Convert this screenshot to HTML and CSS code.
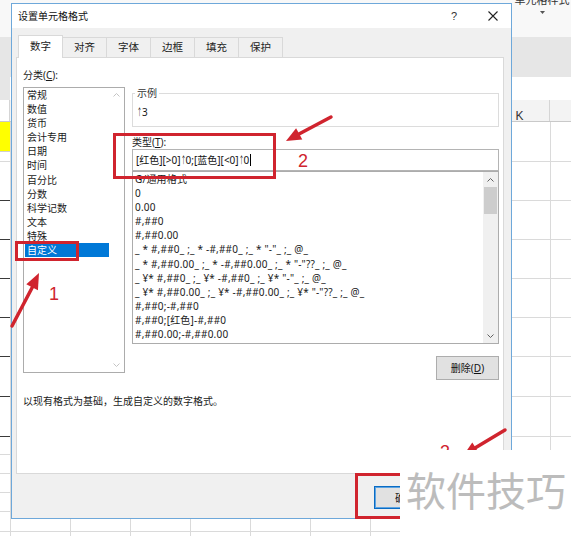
FILE: index.html
```html
<!DOCTYPE html>
<html lang="zh-CN">
<head>
<meta charset="utf-8">
<title>设置单元格格式</title>
<link rel="stylesheet" href="styles.css">
</head>
<body>
<div class="sheet">
  <div class="ribbon">
    <div class="ribbon-group">
      <span class="ribbon-label">单元格样式</span>
      <svg class="ribbon-caret" width="5" height="3" viewBox="0 0 5 3"><path d="M0 0H5L2.5 3Z" fill="#555"/></svg>
    </div>
  </div>
  <div class="fbar"></div>
  <div class="gap"></div>
  <div class="colhead">
    <span class="rh"></span>
    <span class="ch"></span><span class="ch"></span><span class="ch"></span><span class="ch"></span><span class="ch"></span><span class="ch"></span><span class="ch"></span><span class="ch"></span><span class="ch">K</span><span class="ch"></span>
  </div>
  <div class="rows">
    <div class="row h40"><span class="c0"><span class="yellow"></span></span><span class="cells"></span></div>
    <div class="row h39"><span class="c0 dark"></span><span class="cells"></span></div>
    <div class="row h39"><span class="c0 dark"></span><span class="cells"></span></div>
    <div class="row h39"><span class="c0 dark"></span><span class="cells"></span></div>
    <div class="row h39"><span class="c0 dark"></span><span class="cells"></span></div>
    <div class="row h39"><span class="c0 dark"></span><span class="cells"></span></div>
    <div class="row h40"><span class="c0 dark"></span><span class="cells"></span></div>
    <div class="row h40"><span class="c0 dark"></span><span class="cells"></span></div>
    <div class="row h18"><span class="c0"></span><span class="cells"></span></div>
    <div class="row h19"><span class="c0"></span><span class="cells"></span></div>
    <div class="row h19"><span class="c0"></span><span class="cells"></span></div>
    <div class="row h19"><span class="c0"></span><span class="cells"></span></div>
    <div class="row h20"><span class="c0"></span><span class="cells"></span></div>
    <div class="row h20"><span class="c0"></span><span class="cells"></span></div>
  </div>
</div>

<div class="dialog">
  <div class="titlebar">
    <span class="title">设置单元格格式</span>
    <span class="help">?</span>
    <svg class="close" width="10" height="10" viewBox="0 0 10 10"><path d="M0.5 0.5L9.5 9.5M9.5 0.5L0.5 9.5" stroke="#222" stroke-width="1.1" fill="none"/></svg>
  </div>
  <div class="tabs">
    <span class="tab active">数字</span>
    <span class="tab">对齐</span>
    <span class="tab">字体</span>
    <span class="tab">边框</span>
    <span class="tab">填充</span>
    <span class="tab">保护</span>
  </div>
  <div class="panel">
    <div class="cols">
      <div class="cat">
        <div class="lbl cat-lbl">分类(<u>C</u>):</div>
        <div class="listbox cat-list">
          <ul class="items">
            <li>常规</li>
            <li>数值</li>
            <li>货币</li>
            <li>会计专用</li>
            <li>日期</li>
            <li>时间</li>
            <li>百分比</li>
            <li>分数</li>
            <li>科学记数</li>
            <li>文本</li>
            <li>特殊</li>
            <li class="sel">自定义</li>
          </ul>
          <div class="vscroll off">
            <span class="arr"><svg width="7" height="4" viewBox="0 0 7 4"><path d="M0.5 3.5L3.5 0.5L6.5 3.5" stroke="currentColor" fill="none"/></svg></span>
            <span class="arr"><svg width="7" height="4" viewBox="0 0 7 4"><path d="M0.5 0.5L3.5 3.5L6.5 0.5" stroke="currentColor" fill="none"/></svg></span>
          </div>
        </div>
      </div>
      <div class="main">
        <fieldset class="sample">
          <legend>示例</legend>
          <div class="sample-val"><span class="up">↑</span>3</div>
        </fieldset>
        <div class="lbl type-lbl">类型(<u>T</u>):</div>
        <div class="type-input">[红色][&gt;0]<span class="up">↑</span>0;[蓝色][&lt;0]<span class="up">↑</span>0<span class="caret"></span></div>
        <div class="listbox fmt-list">
          <ul class="items">
            <li>G/通用格式</li>
            <li>0</li>
            <li>0.00</li>
            <li>#,##0</li>
            <li>#,##0.00</li>
            <li>_ * #,##0_ ;_ * -#,##0_ ;_ * "-"_ ;_ @_ </li>
            <li>_ * #,##0.00_ ;_ * -#,##0.00_ ;_ * "-"??_ ;_ @_ </li>
            <li>_ ¥* #,##0_ ;_ ¥* -#,##0_ ;_ ¥* "-"_ ;_ @_ </li>
            <li>_ ¥* #,##0.00_ ;_ ¥* -#,##0.00_ ;_ ¥* "-"??_ ;_ @_ </li>
            <li>#,##0;-#,##0</li>
            <li>#,##0;[红色]-#,##0</li>
            <li>#,##0.00;-#,##0.00</li>
          </ul>
          <div class="vscroll">
            <span class="arr"><svg width="7" height="4" viewBox="0 0 7 4"><path d="M0.5 3.5L3.5 0.5L6.5 3.5" stroke="currentColor" fill="none"/></svg></span>
            <span class="thumb"></span>
            <span class="track"></span>
            <span class="arr"><svg width="7" height="4" viewBox="0 0 7 4"><path d="M0.5 0.5L3.5 3.5L6.5 0.5" stroke="currentColor" fill="none"/></svg></span>
          </div>
        </div>
        <div class="btn-row"><button class="btn del">删除(<u>D</u>)</button></div>
      </div>
    </div>
    <p class="desc">以现有格式为基础，生成自定义的数字格式。</p>
  </div>
  <div class="footer">
    <button class="btn default">确定</button>
    <button class="btn">取消</button>
  </div>
</div>

<div class="mark box1"></div>
<div class="mark box2"></div>
<div class="mark box3"></div>
<svg class="arrows" width="571" height="536" viewBox="0 0 571 536">
  <g stroke="#d0242e" stroke-width="3.5" stroke-linecap="round">
    <line x1="12" y1="326" x2="33" y2="286"/>
    <line x1="331" y1="117" x2="299" y2="134"/>
    <line x1="505" y1="430" x2="475" y2="448"/>
  </g>
  <g fill="#d0242e">
    <polygon points="39,273 37.9,290.3 26.3,284.3"/>
    <polygon points="286,141 302.3,139.6 296.1,128.2"/>
    <polygon points="463,456 479.2,453.6 472.3,442.6"/>
  </g>
</svg>
<div class="num n1">1</div>
<div class="num n2">2</div>
<div class="num n3">3</div>

<div class="watermark">软件技巧</div>
</body>
</html>
```
FILE: styles.css
```css
* { box-sizing: border-box; }
html, body { margin: 0; padding: 0; }
body {
  width: 571px;
  height: 536px;
  overflow: hidden;
  position: relative;
  font-family: "Noto Sans", "Noto Sans CJK SC", sans-serif;
  font-size: 10px;
  color: #1a1a1a;
  background: #fff;
}
.up {
  display: inline-block;
  width: 5px;
  font-family: "Noto Sans CJK SC", sans-serif;
  transform: scaleX(0.5);
  transform-origin: 0 50%;
}

/* background spreadsheet */
.sheet { width: 571px; height: 536px; overflow: hidden; background: #fff; }
.ribbon { height: 37px; background: #f8f8f8; display: flex; justify-content: flex-end; }
.ribbon-group { width: 58px; display: flex; flex-direction: column; align-items: center; }
.ribbon-label { font-family: "Noto Sans CJK SC", sans-serif; font-size: 11px; line-height: 12px; margin-top: -7px; white-space: nowrap; color: #333; }
.ribbon-caret { margin-top: 6px; }
.fbar { height: 40px; background: #e6e6e6; }
.gap { height: 23px; background: linear-gradient(to right, #e6e6e6 0 10px, #fff 10px); }
.colhead { height: 22px; background: #f3f3f3; border-bottom: 1px solid #c9c9c9; display: flex; }
.rh { width: 10px; flex: none; background: #fff; border-right: 1px solid #d5d5d5; }
.ch { width: 60px; flex: none; border-right: 1px solid #d5d5d5; text-align: center; font-family: "Liberation Sans", sans-serif; font-size: 12px; line-height: 14px; padding-top: 9px; color: #333; }
.rows { display: flex; flex-direction: column; }
.row { display: flex; }
.h40 { height: 40px; } .h39 { height: 39px; } .h20 { height: 20px; }
.h19 { height: 19px; } .h18 { height: 18px; }
.c0 { width: 10px; flex: none; border-bottom: 1px solid #dadada; }
.c0.dark { border-bottom-color: #3a3a3a; }
.yellow { display: block; height: 30px; background: #ffff00; border-bottom: 1px solid #cfcfcf; }
.cells {
  flex: 1;
  border-bottom: 1px solid #dadada;
  background-image: repeating-linear-gradient(to right, #dadada 0 1px, transparent 1px 60px);
}

/* dialog window */
.dialog {
  position: absolute;
  left: 11px;
  top: 3px;
  width: 501px;
  height: 516px;
  border: 1px solid #6ea8da;
  background: #f0f0f0;
  display: flex;
  flex-direction: column;
}
.titlebar { height: 24px; flex: none; background: #fff; display: flex; align-items: center; padding-left: 6px; }
.title { flex: 1; line-height: 14px; color: #111; }
.help { font-family: "Liberation Sans", sans-serif; font-size: 11px; line-height: 12px; margin-right: 31px; color: #333; }
.close { margin-right: 13px; }

.tabs { display: flex; align-items: flex-end; height: 22px; margin-top: 7px; padding-left: 6px; flex: none; }
.tab {
  width: 45px;
  height: 20px;
  margin-right: -1px;
  border: 1px solid #d9d9d9;
  border-bottom: none;
  background: #f0f0f0;
  text-align: center;
  font-size: 10.5px;
  line-height: 19px;
  color: #222;
}
.tab.active {
  height: 23px;
  margin-bottom: -1px;
  background: #fff;
  position: relative;
  z-index: 1;
  line-height: 21px;
}

.panel {
  height: 417px;
  flex: none;
  margin: 0 7px 0 4px;
  border: 1px solid #d9d9d9;
  background: #fff;
  padding: 10px 4px 0 6px;
}
.cols { display: flex; gap: 7px; align-items: flex-start; }
.cat { width: 102px; flex: none; }
.main { width: 367px; flex: none; padding-top: 18px; }
.lbl { line-height: 14px; height: 14px; white-space: nowrap; }
.cat-lbl { margin-bottom: 5px; }

.listbox { display: flex; border: 1px solid #acacac; background: #fff; }
.items { list-style: none; margin: 0; padding: 0; }
.items li { line-height: 14.1px; height: 14.1px; white-space: pre; }
.cat-list { height: 286px; }
.cat-list .items { width: 84px; margin-left: 1px; }
.cat-list li { padding-left: 2px; }
.cat-list li.sel { background: #0078d7; color: #fff; }

.vscroll { width: 15px; flex: none; display: flex; flex-direction: column; }
.vscroll .arr { height: 15px; display: flex; align-items: center; justify-content: center; color: #606060; }
.vscroll.off { justify-content: space-between; background: #fff; }
.vscroll.off .arr { color: #c4c4c4; height: 14px; }
.fmt-list .vscroll { background: #f0f0f0; }
.thumb { height: 27px; margin: 0 1px; background: #cdcdcd; }
.track { flex: 1; }

.sample { margin: 0; padding: 5px 4px 7px; border: 1px solid #dcdcdc; min-width: 0; }
.sample legend { padding: 0 2px; margin-left: -2px; line-height: 14px; color: #333; }
.sample-val { line-height: 14px; }
.type-lbl { margin-top: 8px; }
.type-input {
  height: 22px;
  border: 1px solid #b4b4b4;
  line-height: 20px;
  padding-left: 3px;
  white-space: nowrap;
  color: #111;
}
.caret { display: inline-block; width: 1px; height: 12px; background: #000; vertical-align: -2px; margin-left: 1px; }
.fmt-list { height: 173px; }
.fmt-list .items { flex: 1; padding-left: 2px; overflow: hidden; letter-spacing: 0.2px; }

.btn {
  font-family: inherit;
  font-size: 10px;
  color: #111;
  background: #e1e1e1;
  border: 1px solid #adadad;
  padding: 0;
  line-height: 14px;
}
.btn-row { display: flex; justify-content: flex-end; margin-top: 12px; }
.del { width: 63px; height: 24px; }
.desc { margin: 14px 0 0; line-height: 14px; }

.footer { flex: 1; display: flex; justify-content: flex-end; align-items: flex-start; gap: 5px; padding: 12px 8px 0 0; }
.footer .btn { width: 62px; height: 23px; }
.footer .default { border-color: #0a6cc4; box-shadow: inset 0 0 0 1px #5ea4e2; }

/* annotations */
.mark { position: absolute; border: 3px solid #d0242e; }
.box1 { left: 15px; top: 241px; width: 64px; height: 20px; }
.box2 { left: 113px; top: 133px; width: 163px; height: 46px; }
.box3 { left: 355px; top: 473px; width: 80px; height: 46px; }
.arrows { position: absolute; left: 0; top: 0; }
.num { position: absolute; font-family: "Liberation Sans", sans-serif; font-size: 18px; line-height: 18px; color: #d0242e; }
.n1 { left: 49px; top: 285px; }
.n2 { left: 298px; top: 152px; }
.n3 { left: 440px; top: 443px; }

.watermark {
  position: absolute;
  left: 400px;
  top: 450px;
  width: 171px;
  height: 86px;
  background: #fff;
  padding: 19px 0 0 6px;
  font-family: "Noto Sans CJK SC", sans-serif;
  font-size: 40px;
  line-height: 40px;
  color: #bcbcbc;
  white-space: nowrap;
}
```
